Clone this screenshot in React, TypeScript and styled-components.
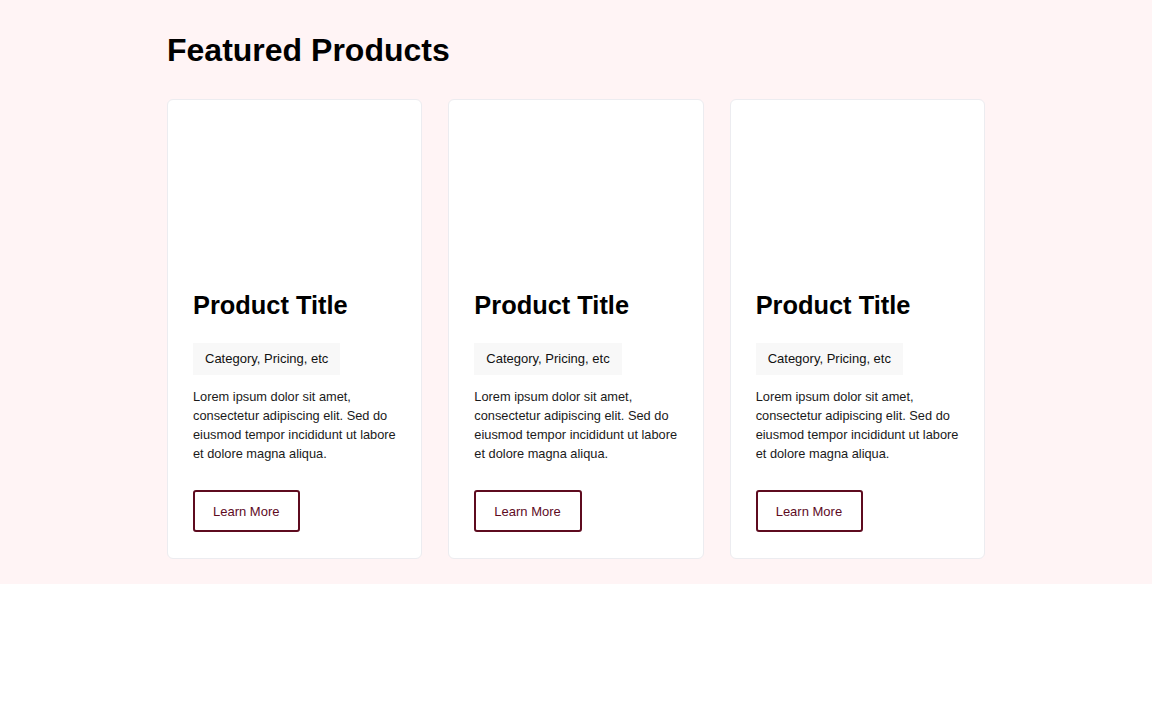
import React from "react";
import styled, { createGlobalStyle } from "styled-components";

const Global = createGlobalStyle`
  html, body { margin: 0; padding: 0; background: #ffffff; }
  body { font-family: "Liberation Sans", Arial, sans-serif; color: #000; }
  * { box-sizing: border-box; }
`;

const Section = styled.section`
  background: #fff4f5;
  padding: 32px 0 25px;
`;

const Container = styled.div`
  width: 818px;
  margin: 0 auto;
`;

const Heading = styled.h2`
  margin: 0 0 30px;
  font-size: 32px;
  font-weight: 700;
  line-height: 37px;
`;

const Grid = styled.div`
  display: grid;
  grid-template-columns: repeat(3, 1fr);
  column-gap: 26px;
`;

const Card = styled.article`
  background: #ffffff;
  border: 1px solid #ececf0;
  border-radius: 6px;
  display: flex;
  flex-direction: column;
`;

const ImageArea = styled.div`
  height: 164px;
`;

const Body = styled.div`
  padding: 26px 25px 26px;
  display: flex;
  flex-direction: column;
  align-items: flex-start;
`;

const Title = styled.h3`
  margin: 0 0 23px;
  font-size: 25.4px;
  font-weight: 700;
  line-height: 30px;
`;

const Tag = styled.span`
  background: #f8f8f8;
  padding: 8px 12px;
  font-size: 13px;
  line-height: 16px;
  color: #111;
`;

const Text = styled.p`
  margin: 12px 0 27px;
  font-size: 12.8px;
  line-height: 19px;
  color: #1a1a1a;
`;

const Button = styled.button`
  font-family: "Liberation Sans", Arial, sans-serif;
  background: #ffffff;
  border: 2px solid #5e0b1f;
  border-radius: 3px;
  color: #5e0b1f;
  font-size: 13px;
  line-height: 15px;
  padding: 12px 19px 11px 18px;
  cursor: pointer;
`;

const products = [1, 2, 3];

export default function App() {
  return (
    <>
      <Global />
      <Section>
        <Container>
          <Heading>Featured Products</Heading>
          <Grid>
            {products.map((p) => (
              <Card key={p}>
                <ImageArea />
                <Body>
                  <Title>Product Title</Title>
                  <Tag>Category, Pricing, etc</Tag>
                  <Text>
                    Lorem ipsum dolor sit amet, consectetur adipiscing elit. Sed do eiusmod tempor
                    incididunt ut labore et dolore magna aliqua.
                  </Text>
                  <Button>Learn More</Button>
                </Body>
              </Card>
            ))}
          </Grid>
        </Container>
      </Section>
    </>
  );
}
